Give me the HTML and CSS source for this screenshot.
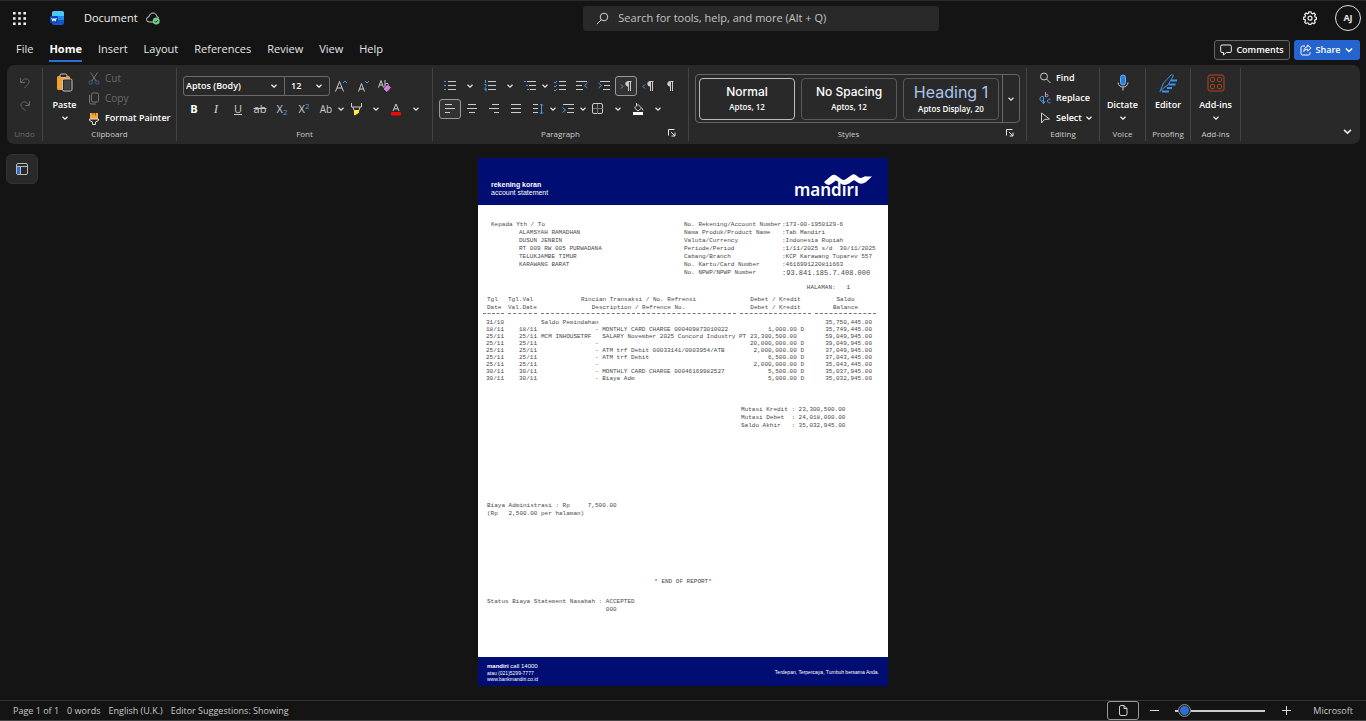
FILE: index.html
```html
<!DOCTYPE html>
<html lang="en">
<head>
<meta charset="utf-8">
<title>Document</title>
<link rel="stylesheet" href="styles.css">
</head>
<body>
<svg class="sprite" aria-hidden="true">
  <symbol id="chev" viewBox="0 0 8 8"><path d="M1.5 2.8 4 5.2 6.5 2.8" fill="none" stroke="currentColor" stroke-width="1.2"/></symbol>
  <symbol id="launch" viewBox="0 0 8 8"><path d="M.5 6.5v-6h6M3 3l4 4M7 3.5V7H3.5" fill="none" stroke="currentColor"/></symbol>
</svg>

<header class="titlebar">
  <button class="icon-btn" aria-label="App launcher"><svg width="13" height="13" viewBox="0 0 13 13" fill="#f2f2f2"><path d="M0 0h2.6v2.6H0zM5.2 0h2.6v2.6H5.200zM10.400 0H13v2.600h-2.600zM0 5.200h2.600v2.600H0zM5.200 5.200h2.600v2.600H5.200zM10.400 5.200H13v2.600h-2.600zM0 10.400h2.600V13H0zM5.200 10.400h2.600V13H5.200zM10.400 10.400H13V13h-2.600z"/></svg></button>
  <svg class="word-logo" width="14" height="16" viewBox="0 0 14 16"><rect x="2" y="1" width="12" height="14" rx="2" fill="#1458c8"/><path d="M2 6V3a2 2 0 0 1 2-2h8a2 2 0 0 1 2 2v3z" fill="#45cbf5"/><rect x="2" y="6" width="12" height="4" fill="#2488e8"/><rect y="6" width="8" height="7" rx="1" fill="#0b47b8"/><path d="m1.800 8 1 3.200L4 8.500l1.200 2.700 1-3.200" fill="none" stroke="#fff"/></svg>
  <button class="doc-name">Document</button>
  <svg class="cloud" width="14" height="13" viewBox="0 0 14 13"><path d="M7 10H3.200a2.600 2.600 0 0 1-.2-5.200C3.300 2.500 4.900 1 7 1s3.700 1.500 4 3.800c.8 0 1.500.3 2 1" fill="none" stroke="#ccc"/><circle cx="10.200" cy="9" r="3.500" fill="#6fce8b"/><path d="m8.700 9.200 1.100 1.100 2-2.200" fill="none" stroke="#163d22"/></svg>
  <label class="search">
    <svg width="13" height="13" viewBox="0 0 13 13" fill="none" stroke="#d0d0d0"><circle cx="8" cy="5" r="3.800"/><path d="m5.300 7.700-4.500 4.500"/></svg>
    <input type="search" aria-label="Search" placeholder="Search for tools, help, and more (Alt + Q)">
  </label>
  <button class="icon-btn gear" aria-label="Settings"><svg width="14" height="14" viewBox="0 0 14 14" fill="none" stroke="#f0f0f0" stroke-width="1.200"><path d="m5.700 1 .3-.2h2l.4 1.600 1.200.5 1.500-.8 1.300 1.400-.8 1.400.5 1.200 1.300.4v1.900l-1.400.4-.5 1.200.8 1.400-1.400 1.300-1.400-.8-1.200.5-.4 1.300H6l-.4-1.400-1.200-.5-1.400.8L1.700 11.200l.8-1.400L2 8.600.700 8.200V6.300L2 5.900l.5-1.200-.8-1.400L3 2l1.400.8 1.200-.5z"/><circle cx="7" cy="7.200" r="2"/></svg></button>
  <button class="avatar">AJ</button>
</header>

<div class="tabrow">
  <nav class="tabs">
    <a href="#file">File</a><a href="#home" class="active">Home</a><a href="#insert">Insert</a><a href="#layout">Layout</a><a href="#references">References</a><a href="#review">Review</a><a href="#view">View</a><a href="#help">Help</a>
  </nav>
  <button class="comments"><svg width="12" height="12" viewBox="0 0 12 12" fill="none" stroke="#f0f0f0"><path d="M2 1h8a1.300 1.300 0 0 1 1.300 1.300v4.900A1.300 1.300 0 0 1 10 8.500H6.500L3.500 11V8.500H2A1.300 1.300 0 0 1 .700 7.200V2.300A1.300 1.300 0 0 1 2 1z"/></svg>Comments</button>
  <button class="share"><svg width="12" height="12" viewBox="0 0 12 12" fill="none" stroke="#fff"><path d="M5 2H2.500A1.500 1.500 0 0 0 1 3.500v6A1.500 1.500 0 0 0 2.500 11h6A1.500 1.500 0 0 0 10 9.500V8M7.500 1l3.500 3-3.500 3V5.200C5.500 5.200 4.500 6 3.800 7.500 4 4.500 5.500 3 7.500 2.800z"/></svg>Share<svg width="10" height="10"><use href="#chev"/></svg></button>
</div>

<section class="ribbon" aria-label="Ribbon">
  <div class="group undo">
    <div class="body stack">
      <button class="t" aria-label="Undo"><svg width="12" height="12" viewBox="0 0 12 12" fill="none" stroke="#666"><path d="M1.500 1v4.500H6M1.500 5.500 4.500 2.700c2-1.700 5-.7 5.500 1.500.3 1.400-.2 2.300-1 3.100L5.500 11"/></svg></button>
      <button class="t" aria-label="Redo"><svg width="12" height="12" viewBox="0 0 12 12" fill="none" stroke="#666"><path d="M10.500 1v4.500H6M10.500 5.500 7.500 2.700C5.500 1 2.500 2 2 4.200c-.3 1.400.2 2.300 1 3.100L6.500 11"/></svg></button>
    </div>
    <h2 class="dim">Undo</h2>
  </div>

  <div class="group clipboard">
    <div class="body">
      <button class="big paste"><svg width="18" height="20" viewBox="0 0 18 20"><path d="M2.500 3h2v-1h6v1h2A1.500 1.500 0 0 1 14 4.500V17H2.500A1.500 1.500 0 0 1 1 15.500v-11A1.500 1.500 0 0 1 2.500 3z" fill="#f5a02c"/><rect x="4" y="1" width="7" height="3.500" rx="1.500" fill="#292929" stroke="#d9c6a5"/><rect x="6.500" y="6" width="9.500" height="12" rx="1.500" fill="#292929" stroke="#c8c8c8"/><rect x="8" y="7.500" width="6.500" height="9" fill="#444"/></svg><span>Paste</span><svg width="8" height="8"><use href="#chev"/></svg></button>
      <div class="list">
        <button class="dim"><svg width="12" height="13" viewBox="0 0 12 13" fill="none" stroke="#777"><path d="m2.500.500 5.700 8.700M9.500.500 3.800 9.200"/><circle cx="2.700" cy="10.500" r="1.700" stroke="#3d6285"/><circle cx="9.300" cy="10.500" r="1.700" stroke="#3d6285"/></svg>Cut</button>
        <button class="dim"><svg width="12" height="13" viewBox="0 0 12 13" fill="none" stroke="#777"><rect x="3.500" y="1" width="7" height="9" rx="1.500"/><path d="M1.500 3v7A2 2 0 0 0 3.500 12H8"/></svg>Copy</button>
        <button><svg width="12" height="13" viewBox="0 0 12 13"><path d="M2 1h8v6H2z" fill="#f5a93b"/><path d="M5 1v2M7.500 1v2.500" stroke="#8c5a10"/><path d="M1.500 7h9v1.500L7.500 10v2.500h-3V10L1.500 8.500z" fill="#292929" stroke="#ddd"/></svg>Format Painter</button>
      </div>
    </div>
    <h2>Clipboard</h2>
  </div>

  <div class="group font">
    <div class="body rows">
      <div class="row">
        <div class="combo">
          <label class="pick family"><select aria-label="Font"><option>Aptos (Body)</option></select><svg width="8" height="8"><use href="#chev"/></svg></label>
          <label class="pick size"><select aria-label="Font size"><option>12</option></select><svg width="8" height="8"><use href="#chev"/></svg></label>
        </div>
        <button class="t" aria-label="Grow font"><svg width="14" height="14" viewBox="0 0 14 14" fill="none" stroke="#ccc"><path d="m1.500 12.500 4-10 4 10M3 9h5"/><path d="m9 4 2-2 2 2" stroke="#4a9be8"/></svg></button>
        <button class="t" aria-label="Shrink font"><svg width="14" height="14" viewBox="0 0 14 14" fill="none" stroke="#ccc"><path d="m2.500 12.500 3-8 3 8M3.500 10h4"/><path d="m9 2 2 2 2-2" stroke="#4a9be8"/></svg></button>
        <button class="t" aria-label="Clear formatting"><svg width="14" height="14" viewBox="0 0 14 14" fill="none" stroke="#ccc"><path d="m.500 8.500 2.500-7 2.500 7M1.500 6h3M7 1v7.500M7 5.500c.5-1.500 3.500-1.500 3.500 0"/><path d="m9.500 6 3 2.500-3.500 4-3-2.500z" fill="#d77be0" stroke="#d77be0"/></svg></button>
      </div>
      <div class="row">
        <button class="t glyph b">B</button><button class="t glyph i">I</button><button class="t glyph u">U</button><button class="t glyph s">ab</button><button class="t glyph">X<sub>2</sub></button><button class="t glyph">X<sup>2</sup></button><button class="t glyph case">Ab</button><button class="c" aria-label="Case options"><svg width="8" height="8"><use href="#chev"/></svg></button>
        <button class="t" aria-label="Highlight"><svg width="13" height="14" viewBox="0 0 13 14" fill="none" stroke="#ccc"><path d="M1.500 1v4h10V1M3 5l1 3.500h5L10 5"/><path d="M4.500 8.500h4v2.200l-4 2.300z" fill="#ffee32" stroke="#ffee32"/></svg></button><button class="c wide" aria-label="Highlight options"><svg width="8" height="8"><use href="#chev"/></svg></button>
        <button class="t" aria-label="Font color"><svg width="12" height="13" viewBox="0 0 12 13"><path d="m3 8 3-7 3 7M4 5.800h4" fill="none" stroke="#ccc"/><rect x="1" y="9" width="10" height="3.500" rx="1" fill="#f00808"/></svg></button><button class="c wide" aria-label="Font color options"><svg width="8" height="8"><use href="#chev"/></svg></button>
      </div>
    </div>
    <h2>Font</h2>
  </div>

  <div class="group para">
    <div class="body rows">
      <div class="row">
        <button class="t" aria-label="Bullets"><svg class="ln" viewBox="0 0 12 12"><path d="M4 1.500h8M4 5.500h8M4 9.500h8"/><path class="bl" d="M0 1.500h2M0 5.500h2M0 9.500h2"/></svg></button><button class="c wide" aria-label="Bullet options"><svg width="8" height="8"><use href="#chev"/></svg></button>
        <button class="t" aria-label="Numbering"><svg class="ln" viewBox="0 0 12 12"><path d="M4 1.500h8M4 5.500h8M4 9.500h8"/><path class="bl" d="M1.500 0v3M.500 4.500h1.500v2M.500 8h1.500v3.500M.500 9.500h1.500"/></svg></button><button class="c wide" aria-label="Numbering options"><svg width="8" height="8"><use href="#chev"/></svg></button>
        <button class="t" aria-label="Multilevel list"><svg class="ln" viewBox="0 0 12 12"><path d="M3 1.500h9M5 5.500h7M6 9.500h6"/><path class="bl" d="M0 1.500h2M2 5.500h2M3 9.500h2"/></svg></button><button class="c" aria-label="Multilevel options"><svg width="8" height="8"><use href="#chev"/></svg></button>
        <button class="t" aria-label="Checklist"><svg class="ln" viewBox="0 0 12 12"><path d="M5 1.500h7M5 5.500h7M5 9.500h7"/><path class="bl" d="m0 2 1 1 2-2M0 6l1 1 2-2M0 10l1 1 2-2"/></svg></button>
        <button class="t" aria-label="Decrease indent"><svg class="ln" viewBox="0 0 12 12"><path d="M0 1.500h11M0 5.500h6M0 9.500h7"/><path class="bl" d="M11.500 3 8.500 5.500l3 2.500"/></svg></button>
        <button class="t" aria-label="Increase indent"><svg class="ln" viewBox="0 0 12 12"><path d="M2 1.500h10M6 5.500h6M5 9.500h7"/><path class="bl" d="M.500 3 3.500 5.500.500 8"/></svg></button>
        <button class="t on" aria-label="Left to right"><svg class="ln" viewBox="0 0 12 12"><path d="M11.500 1.500H8a2.300 2.300 0 0 0 0 4.600h.5M8.500 1.500V11M10.500 1.500V11"/><path d="M6.500 2.500h2v3h-2z" fill="#ccc"/><path class="bl" d="m1 4.500 2 2-2 2"/></svg></button>
        <button class="t" aria-label="Right to left"><svg class="ln" viewBox="0 0 12 12"><path d="M11.500 1.500H8a2.300 2.300 0 0 0 0 4.600h.5M8.500 1.500V11M10.500 1.500V11"/><path d="M6.500 2.500h2v3h-2z" fill="#ccc"/><path class="bl" d="m3 4.500-2 2 2 2"/></svg></button>
        <button class="t" aria-label="Show marks"><svg class="ln" viewBox="0 0 12 12"><path d="M9.500 1.500H6a2.300 2.300 0 0 0 0 4.600h.5M6.500 1.500V11M8.500 1.500V11"/><path d="M4.500 2.500h2v3h-2z" fill="#ccc"/></svg></button>
      </div>
      <div class="row">
        <button class="t on" aria-label="Align left"><svg class="ln" viewBox="0 0 12 12"><path d="M1 1.500h7M1 5.500h10M1 9.500h5"/></svg></button>
        <button class="t" aria-label="Center"><svg class="ln" viewBox="0 0 12 12"><path d="M2 1.500h8M1 5.500h10M3 9.500h6"/></svg></button>
        <button class="t" aria-label="Align right"><svg class="ln" viewBox="0 0 12 12"><path d="M4 1.500h7M1 5.500h10M6 9.500h5"/></svg></button>
        <button class="t" aria-label="Justify"><svg class="ln" viewBox="0 0 12 12"><path d="M1 1.500h10M1 5.500h10M1 9.500h10"/></svg></button>
        <button class="t" aria-label="Line spacing"><svg class="ln" viewBox="0 0 12 12"><path d="M1 1.500h5M1 5.500h5M1 9.500h5"/><path class="bl" d="M9.500 1v10M8 2.500l1.500-1.500L11 2.500M8 9.500 9.500 11 11 9.500"/></svg></button><button class="c" aria-label="Spacing options"><svg width="8" height="8"><use href="#chev"/></svg></button>
        <button class="t" aria-label="Indent"><svg class="ln" viewBox="0 0 12 12"><path d="M1 1.500h11M6 5.500h6M5 9.500h7"/><path class="bl" d="m.500 4.500 3 2.500-3 2.500"/></svg></button><button class="c" aria-label="Indent options"><svg width="8" height="8"><use href="#chev"/></svg></button>
        <button class="t" aria-label="Borders"><svg class="ln" viewBox="0 0 12 12"><rect x=".500" y=".500" width="10" height="10" rx="1.500"/><path d="M5.500 1v10M1 5.500h10" stroke="#777"/></svg></button><button class="c wide" aria-label="Border options"><svg width="8" height="8"><use href="#chev"/></svg></button>
        <button class="t" aria-label="Shading"><svg class="ln" viewBox="0 0 12 12"><path d="m6 1.500 3.500 3.500L6 8 2.500 5zM4.500 0v3"/><path d="M10 5l1 2.500"/><rect x="1.500" y="9.500" width="9" height="2" fill="#fff" stroke="#fff"/></svg></button><button class="c wide" aria-label="Shading options"><svg width="8" height="8"><use href="#chev"/></svg></button>
      </div>
    </div>
    <h2>Paragraph</h2>
    <button class="launcher" aria-label="Paragraph settings"><svg width="8" height="8"><use href="#launch"/></svg></button>
  </div>

  <div class="group styles">
    <div class="body">
      <div class="gallery">
        <button class="card sel"><strong>Normal</strong><small>Aptos, 12</small></button>
        <button class="card"><strong>No Spacing</strong><small>Aptos, 12</small></button>
        <button class="card"><strong class="h1">Heading 1</strong><small>Aptos Display, 20</small></button>
        <button class="more" aria-label="More styles"><svg width="8" height="8"><use href="#chev"/></svg></button>
      </div>
    </div>
    <h2>Styles</h2>
    <button class="launcher" aria-label="Styles settings"><svg width="8" height="8"><use href="#launch"/></svg></button>
  </div>

  <div class="group editing">
    <div class="body list">
      <button><svg width="12" height="12" viewBox="0 0 12 12" fill="none" stroke="#ccc"><circle cx="5" cy="4.500" r="3.500"/><path d="m7.500 7 4 4"/></svg>Find</button>
      <button><svg width="12" height="12" viewBox="0 0 12 12" fill="none" stroke="#4a9be8"><path d="M6.500 0v5M6.500 3c1-1.200 2.500-.7 2.500.5S7.500 5.200 6.500 4.300" stroke="#c48ee0"/><path d="M4.500 4.500C2 4 .500 5.500 1 7.500S3.500 9 4.500 8M4.500 5v7M2.500 9.500l2 1.500 2-1.500M11.500 7.500c-1.500-1-3 0-3 1.500s1.500 2.500 3 1.500"/></svg>Replace</button>
      <button><svg width="12" height="12" viewBox="0 0 12 12" fill="none" stroke="#ccc"><path d="M2.500 1v10l3-3.500 5-.5z"/></svg>Select<svg class="tail" width="8" height="8"><use href="#chev"/></svg></button>
    </div>
    <h2>Editing</h2>
  </div>

  <div class="group voice">
    <div class="body"><button class="big"><svg width="18" height="20" viewBox="0 0 18 20"><rect x="6.500" y="2" width="5" height="10" rx="2.500" fill="#2b7de0" stroke="#6ab0f5"/><path d="M4 9.500c0 6 10 6 10 0M9 14v3.500" fill="none" stroke="#ccc"/></svg><span>Dictate</span><svg width="8" height="8"><use href="#chev"/></svg></button></div>
    <h2>Voice</h2>
  </div>
  <div class="group proofing">
    <div class="body"><button class="big"><svg width="18" height="20" viewBox="0 0 18 20" fill="none" stroke="#3d93ee"><path d="M1 18.500 4.500 10 12.500 1.500l2 1L9 12l-4.500 3z"/><path d="M12 7.500h6M10 11.500h6.500M8 15h5M3 18.500h7" stroke-width="2"/></svg><span>Editor</span></button></div>
    <h2>Proofing</h2>
  </div>
  <div class="group addins">
    <div class="body"><button class="big"><svg width="18" height="20" viewBox="0 0 18 20" fill="none" stroke="#b5461f"><rect x="1" y="2" width="16" height="16" rx="2"/><rect x="3.500" y="4.500" width="4" height="4" rx="1"/><rect x="10.500" y="4.500" width="4" height="4" rx="1"/><rect x="3.500" y="11.500" width="4" height="4" rx="1"/><rect x="10.500" y="11.500" width="4" height="4" rx="1"/></svg><span>Add-ins</span><svg width="8" height="8"><use href="#chev"/></svg></button></div>
    <h2>Add-ins</h2>
  </div>
  <button class="collapse" aria-label="Collapse ribbon"><svg width="11" height="11"><use href="#chev"/></svg></button>
</section>

<main class="workspace">
  <button class="nav-toggle" aria-label="Navigation"><svg width="12" height="12" viewBox="0 0 12 12"><rect x=".500" y=".500" width="11" height="11" rx="1.500" fill="none" stroke="#bbb"/><rect x="1" y="3.500" width="3" height="7.500" fill="#2b6fd6"/><path d="M4.500 3v8M1 3.500h10" stroke="#bbb"/></svg></button>

  <article class="page">
    <header class="bank-head">
      <p><b>rekening koran</b><br>account statement</p>
      <div class="brand"><svg width="50" height="12" viewBox="0 0 50 12"><path d="M1 8 8 2q3-2.500 6 0l5 3.500q2 1 4-.5L28 1.500q3-2.500 6 .5l2 1.500q2 1 4-.3 2-1.200 4-.7h5L43 8q-5 3.500-9 0L31 6l-5 3.500q-5 3-9-.5L13 6.500 8 10q-4 2.500-7-2z" fill="#fff"/></svg><span>mandırı</span></div>
    </header>
    <div class="sheet">
      <section class="parties">
        <div><p>Kepada Yth / To</p><address>ALAMSYAH RAMADHAN<br>DUSUN JENBIN<br>RT 009 RW 005 PURWADANA<br>TELUKJAMBE TIMUR<br>KARAWANG BARAT</address></div>
        <dl>
          <dt>No. Rekening/Account Number</dt><dd>:173-00-1950129-6</dd>
          <dt>Nama Produk/Product Name</dt><dd>:Tab Mandiri</dd>
          <dt>Valuta/Currency</dt><dd>:Indonesia Rupiah</dd>
          <dt>Periode/Period</dt><dd>:1/11/2025 s/d  30/11/2025</dd>
          <dt>Cabang/Branch</dt><dd>:KCP Karawang Tuparev 557</dd>
          <dt>No. Kartu/Card Number</dt><dd>:4616991220811663</dd>
          <dt>No. NPWP/NPWP Number</dt><dd class="npwp">:93.841.185.7.408.000</dd>
        </dl>
      </section>
      <p class="pageno">HALAMAN:   1</p>
      <table>
        <colgroup><col class="c1"><col class="c2"><col class="c3"><col class="c4"><col class="c5"></colgroup>
        <thead><tr><th class="first">Tgl<br>Date</th><th class="left">Tgl.Val<br>Val.Date</th><th>Rincian Transaksi / No. Refrensi<br>Description / Refrence No.</th><th>Debet / Kredit<br>Debet / Kredit</th><th>Saldo<br>Balance</th></tr></thead>
        <tbody>
          <tr><td>31/10</td><td></td><td><span>Saldo Pemindahan</span></td><td></td><td>35,750,445.00</td></tr>
          <tr><td>18/11</td><td>18/11</td><td><span></span>- MONTHLY CARD CHARGE 000409873010022</td><td>1,000.00 D</td><td>35,749,445.00</td></tr>
          <tr><td>25/11</td><td>25/11</td><td><span>MCM INHOUSETRF</span>  SALARY November 2025 Concord Industry PT</td><td>23,300,500.00  </td><td>59,049,945.00</td></tr>
          <tr><td>25/11</td><td>25/11</td><td><span></span>-</td><td>20,000,000.00 D</td><td>39,049,945.00</td></tr>
          <tr><td>25/11</td><td>25/11</td><td><span></span>- ATM trf Debit 00033141/0003954/ATB</td><td>2,000,000.00 D</td><td>37,049,945.00</td></tr>
          <tr><td>25/11</td><td>25/11</td><td><span></span>- ATM trf Debit</td><td>6,500.00 D</td><td>37,043,445.00</td></tr>
          <tr><td>25/11</td><td>25/11</td><td><span></span>-</td><td>2,000,000.00 D</td><td>35,043,445.00</td></tr>
          <tr><td>30/11</td><td>30/11</td><td><span></span>- MONTHLY CARD CHARGE 00046169982527</td><td>5,500.00 D</td><td>35,037,945.00</td></tr>
          <tr><td>30/11</td><td>30/11</td><td><span></span>- Biaya Adm</td><td>5,000.00 D</td><td>35,032,945.00</td></tr>
        </tbody>
      </table>
      <p class="totals">Mutasi Kredit : 23,300,500.00<br>Mutasi Debet  : 24,018,000.00<br>Saldo Akhir   : 35,032,945.00</p>
      <p class="fees">Biaya Administrasi : Rp     7,500.00<br>(Rp   2,500.00 per halaman)</p>
      <p class="end">* END OF REPORT*</p>
      <p class="status">Status Biaya Statement Nasabah : ACCEPTED<br>                                 000</p>
    </div>
    <footer class="bank-foot">
      <p><span class="call"><b>mandiri</b> call 14000</span><br>atau (021)5299-7777<br>www.bankmandiri.co.id</p>
      <p class="motto">Terdepan, Terpercaya, Tumbuh bersama Anda.</p>
    </footer>
  </article>
</main>

<footer class="statusbar">
  <span>Page 1 of 1</span><span>0 words</span><span>English (U.K.)</span><span>Editor Suggestions: Showing</span>
  <button class="view" aria-label="Page view"><svg width="9" height="11" viewBox="0 0 9 11" fill="none" stroke="#d0d0d0"><path d="M2 .500h3L8 3.500V9a1.500 1.500 0 0 1-1.500 1.500h-4.500A1.500 1.500 0 0 1 .500 9V2A1.500 1.500 0 0 1 2 .500zM5 .500v3h3"/></svg></button>
  <button class="zoom" aria-label="Zoom out"><svg width="9" height="9" viewBox="0 0 9 9" stroke="#ddd"><path d="M0 4.500h9"/></svg></button>
  <input type="range" aria-label="Zoom" min="0" max="100" value="3">
  <button class="zoom" aria-label="Zoom in"><svg width="9" height="9" viewBox="0 0 9 9" stroke="#ddd"><path d="M0 4.500h9M4.500 0v9"/></svg></button>
  <span class="ms">Microsoft</span>
</footer>
</body>
</html>
```

FILE: styles.css
```css
* { box-sizing: border-box; }
body {
  margin: 0;
  min-height: 100vh;
  display: flex;
  flex-direction: column;
  background: #141414;
  color: #e6e6e6;
  font: 11px/16px "Open Sans", "Noto Sans", sans-serif;
}
button, input, select { font: inherit; color: inherit; background: none; border: 0; padding: 0; margin: 0; }
button { display: flex; align-items: center; justify-content: center; white-space: nowrap; }
svg { flex: none; display: block; }
p, h2, dl, dd { margin: 0; }
a { color: inherit; text-decoration: none; }
.sprite { position: absolute; width: 0; height: 0; }

.titlebar {
  display: flex;
  align-items: center;
  height: 35px;
  padding: 0 5px 0 12px;
  border-top: 1px solid #2a2a2a;
}
.icon-btn { width: 14px; height: 24px; }
.word-logo { margin-left: 24px; }
.doc-name { margin-left: 20px; font-weight: 500; color: #f2f2f2; }
.cloud { margin: 0 60px 0 8px; }
.search {
  display: flex;
  align-items: center;
  gap: 9px;
  width: 356px;
  height: 25px;
  margin: 0 auto;
  padding: 0 13px;
  background: #292929;
  border-radius: 3px;
}
.search input { flex: 1; outline: 0; font-size: 11px; }
.search input::placeholder { color: #c4c4c4; opacity: 1; }
.gear { margin-right: 18px; }
.avatar { width: 26px; height: 26px; border: 1px solid #e0e0e0; border-radius: 50%; font-size: 9px; font-weight: 700; }

.tabrow { display: flex; align-items: center; gap: 4px; height: 30px; padding: 0 6px 0 16px; }
.tabs { flex: 1; display: flex; gap: 16px; }
.tabs a { height: 24px; line-height: 22px; border-bottom: 2px solid transparent; }
.tabs a.active { font-weight: 700; color: #fff; border-color: #2b6fd6; }
.comments, .share { height: 20px; border-radius: 3px; gap: 4px; font-size: 9px; font-weight: 600; color: #fff; }
.comments { width: 76px; border: 1px solid #666; background: #1f1f1f; }
.share { width: 66px; background: #2564cf; }

.ribbon { display: flex; height: 79px; margin: 0 6px 0 7px; padding: 3px 0; background: #292929; border-radius: 7px; position: relative; }
.group { position: relative; flex: none; display: flex; flex-direction: column; border-right: 1px solid #444; }
.body { flex: 1; min-height: 0; display: flex; }
.group h2 { font-size: 8px; line-height: 14px; font-weight: 500; text-align: center; color: #ccc; }
.group .dim, .group h2.dim { color: #6c6c6c; }
.undo { width: 36px; }
.clipboard { width: 134px; }
.font { width: 256px; }
.para { width: 256px; }
.styles { width: 338px; }
.styles h2 { padding-right: 18px; }
.editing { width: 73px; }
.voice { width: 46px; }
.proofing { width: 45px; }
.addins { width: 50px; }
.stack { flex-direction: column; align-items: center; padding-top: 5px; gap: 3px; }
.big { flex: 1; flex-direction: column; justify-content: flex-start; font-size: 9px; font-weight: 600; color: #fff; padding-top: 5px; }
.big span { line-height: 18px; margin-top: 3px; }
.paste { flex: none; width: 43px; }
.list { display: flex; flex-direction: column; }
.list button { height: 20px; flex: none; gap: 5px; justify-content: flex-start; font-size: 9px; font-weight: 600; color: #fff; }
.list button.dim { font-size: 10px; font-weight: 400; }
.clipboard .list { padding-left: 2px; }
.editing .list { padding-left: 12px; }
.editing .list .tail { margin-left: -2px; }

.rows { flex-direction: column; gap: 1px; padding: 7px 0 0 6px; }
.row { display: flex; align-items: center; height: 22px; }
.t { width: 22px; height: 20px; }
.c { width: 8px; height: 20px; }
.c.wide { width: 18px; }
.on { border: 1px solid #9a9a9a; border-radius: 3px; background: #333; }
.ln { width: 12px; height: 12px; fill: none; stroke: #ccc; }
.bl { stroke: #4a9be8; }
.combo { display: flex; height: 20px; width: 147px; border: 1px solid #6a6a6a; border-radius: 3px; }
.pick { display: flex; align-items: center; padding-right: 6px; font-size: 9px; font-weight: 600; color: #fff; }
.pick select { flex: 1; min-width: 0; appearance: none; outline: 0; padding-left: 2px; }
.family { flex: 1; border-right: 1px solid #6a6a6a; }
.size { width: 44px; }
.size select { padding-left: 6px; }
.glyph { font-size: 11px; color: #ccc; }
.glyph sub, .glyph sup { font-size: 8px; line-height: 8px; color: #4a9be8; }
.glyph sub { padding-top: 6px; }
.glyph sup { padding-bottom: 6px; }
.b { font-weight: 700; color: #fff; }
.i { font-family: "Liberation Serif", serif; font-style: italic; font-size: 13px; }
.u { text-decoration: underline; }
.s { text-decoration: line-through; }
.case { font-size: 10px; }
.launcher { position: absolute; right: 12px; bottom: 4px; }

.gallery { display: flex; gap: 6px; height: 49px; margin: 6px 0 0 6px; padding: 3px 0 2px 3px; border: 1px solid #666; border-radius: 4px; width: 325px; }
.card { width: 96px; height: 42px; flex-direction: column; border: 1px solid #5a5a5a; border-radius: 4px; font-family: Inter, Roboto, sans-serif; color: #fff; }
.card.sel { border-color: #bbb; }
.card strong { font-size: 12px; line-height: 16px; font-weight: 500; }
.card strong.h1 { font-size: 16px; line-height: 20px; font-weight: 400; color: #a9c6ee; }
.card small { font: 600 8px/14px "Open Sans", sans-serif; }
.more { flex: 1; margin: -3px 0 -2px -3px; border-left: 1px solid #666; }
.collapse { position: absolute; right: 7px; bottom: 7px; }

.workspace { flex: 1; display: grid; grid-template-columns: 1fr 410px 1fr; align-items: start; padding-bottom: 14px; }
.nav-toggle { width: 32px; height: 30px; margin: 10px 0 0 6px; background: #292929; border: 1px solid #333; border-radius: 6px; }

.page { margin-top: 14px; min-height: 528px; display: flex; flex-direction: column; background: #fff; color: #484848; }
.bank-head { display: flex; justify-content: space-between; height: 47px; padding: 23px 15px 0 13px; background: #000d72; color: #fff; font: 7px/8px "Liberation Sans", Arial, sans-serif; }
.brand { display: flex; flex-direction: column; width: 79px; margin-top: -7px; }
.brand svg { align-self: flex-end; }
.brand span { font: 600 17px/20px "Noto Sans", sans-serif; margin-top: -6px; }
.sheet { flex: 1; padding: 16px 0 0; font: 6px/8px "Liberation Mono", "Courier New", monospace; }
.sheet p, address, dt, dd { white-space: pre; }
.parties { display: flex; padding-left: 13px; }
.parties > div { flex: 1; }
address { font-style: normal; padding-left: 28px; }
dl { display: grid; grid-template-columns: 98px 106px; grid-auto-rows: 8px; }
.npwp { font-size: 7px; }
.pageno { margin-top: 7px; padding-right: 38px; text-align: right; }
table { table-layout: fixed; width: 401px; margin: 4px 0 0 1px; border-collapse: separate; border-spacing: 4px 0; }
.c1 { width: 21px; }
.c2 { width: 29px; }
.c3 { width: 195px; }
.c4 { width: 71px; }
.c5 { width: 61px; }
th { padding: 0 0 1px; font-weight: 400; white-space: nowrap; border-bottom: 1px dashed #777; }
th.left, th.first { text-align: left; }
th.first { padding-left: 4px; }
td { height: 7px; padding: 0; line-height: 7px; text-align: right; white-space: pre; }
tbody::before { content: ""; display: block; height: 5px; }
td:nth-child(3) { text-align: left; }
td:nth-child(3) span { display: inline-block; width: 54px; }
td:nth-child(4) { padding-right: 7px; }
td:nth-child(5) { padding-right: 4px; }
.sheet .totals { margin: 24px 0 0 263px; }
.sheet .fees { margin: 72px 0 0 9px; }
.sheet .end { margin-top: 60px; text-align: center; }
.sheet .status { margin: 12px 0 0 9px; }
.bank-foot { display: flex; justify-content: space-between; height: 29px; padding: 5px 9px 0; background: #000d72; color: #fff; font: 5px/6px "Liberation Sans", Arial, sans-serif; }
.call { font-size: 6px; line-height: 8px; }
.motto { font-size: 5px; line-height: 20px; }

.statusbar { display: flex; align-items: center; gap: 8px; height: 21px; padding: 0 13px; border-top: 1px solid #333; border-bottom: 1px solid #444; font-size: 9px; color: #c8c8c8; }
.view { width: 32px; height: 19px; margin-left: auto; border: 1px solid #999; border-radius: 3px; }
.zoom { width: 14px; height: 14px; }
input[type="range"] { appearance: none; width: 90px; height: 14px; margin: 0 6px; background: linear-gradient(#ccc, #ccc) center / 100% 2px no-repeat; }
input[type="range"]::-webkit-slider-thumb { appearance: none; width: 13px; height: 13px; border-radius: 50%; background: #2b6fd6; border: 2px solid #292929; outline: 1px solid #888; outline-offset: -1px; }
.ms { margin-left: 12px; }
```
